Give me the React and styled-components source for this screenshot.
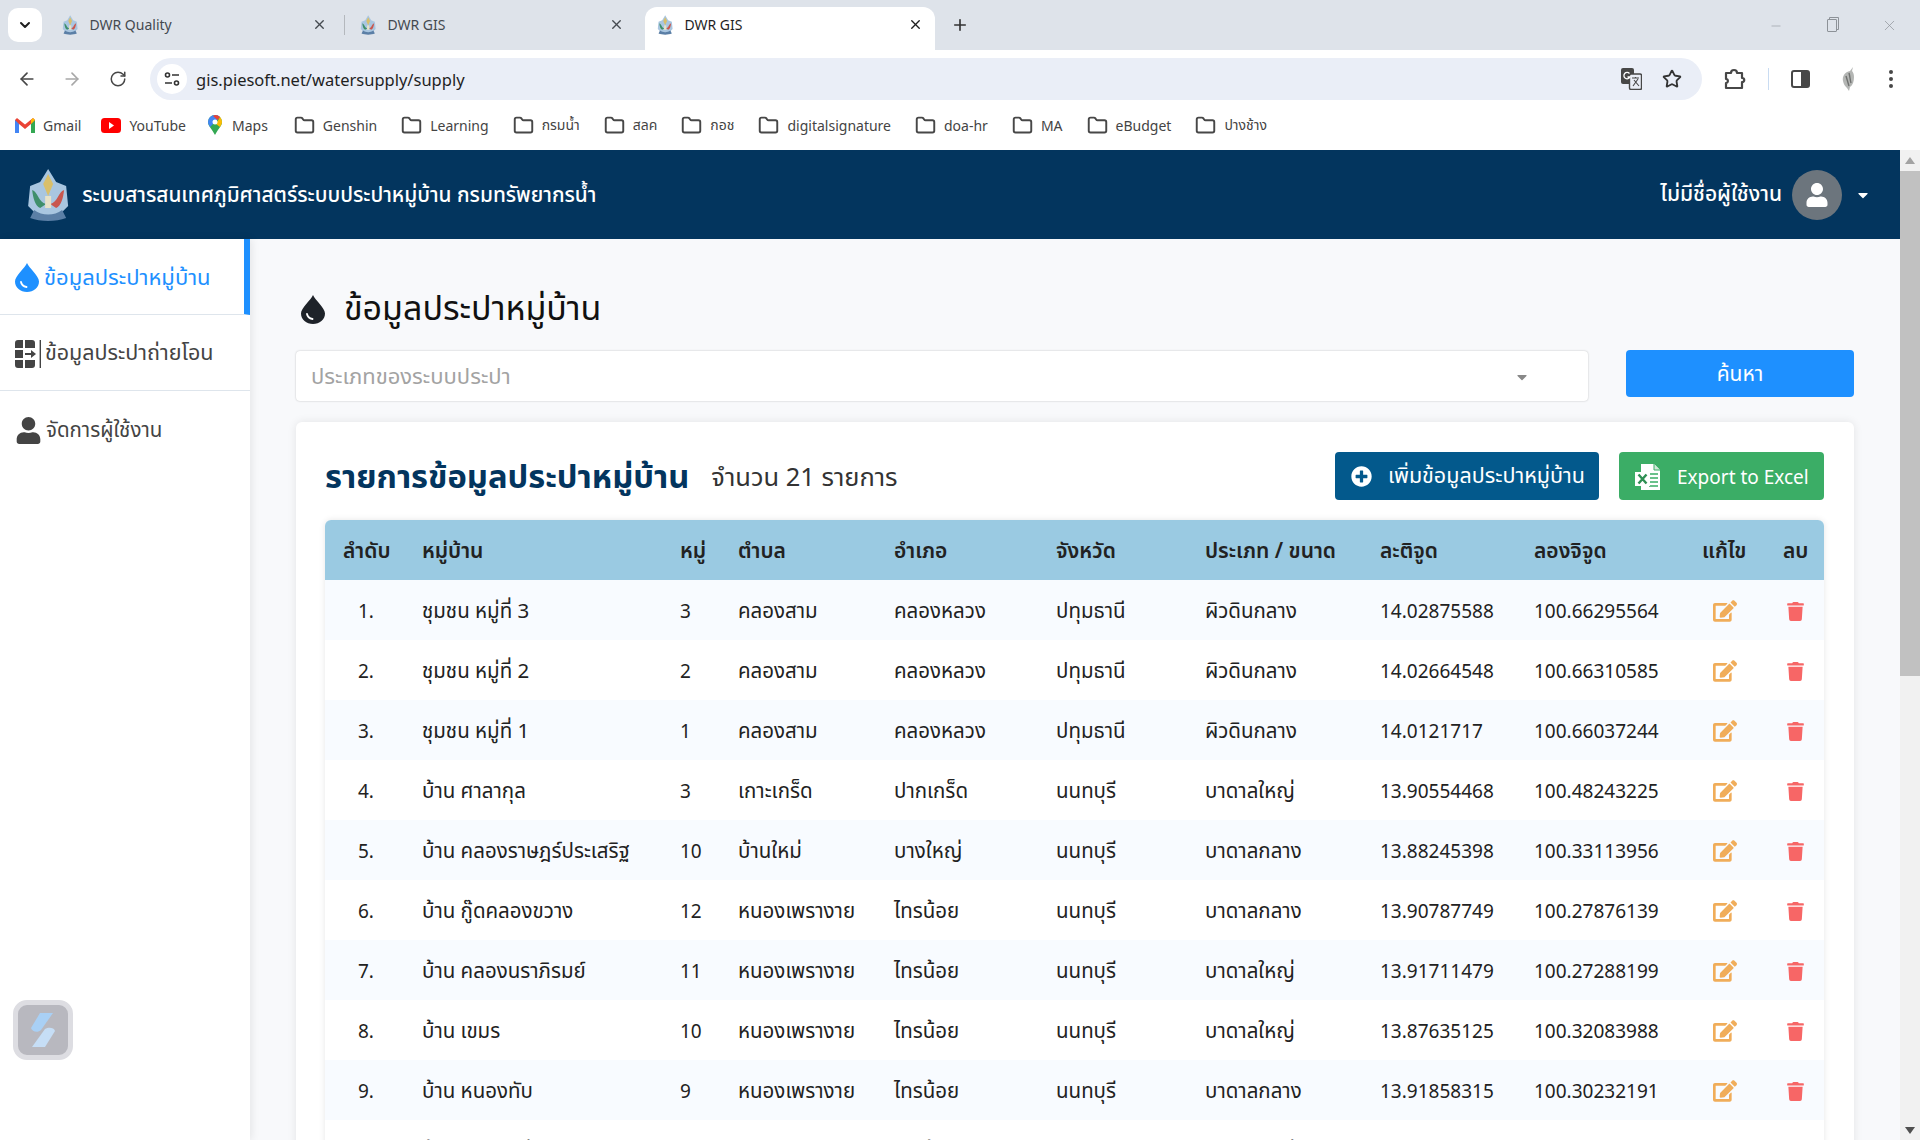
import React from "react";
import styled, { createGlobalStyle } from "styled-components";
import { FaUser, FaEdit, FaTrash, FaPlusCircle, FaCaretDown } from "react-icons/fa";
import { ArrowLeft, ArrowRight, RotateCw, Star, ChevronDown, X, Plus, Minus, Folder } from "lucide-react";

const THAI = `"Noto Sans", "Noto Sans Thai", "Open Sans", sans-serif`;

const GlobalStyle = createGlobalStyle`
  html, body { margin: 0; padding: 0; background: #fff; overflow: hidden; }
  * { box-sizing: border-box; }
  body { font-family: ${THAI}; }
`;

const rows = [
  ["1.", "ชุมชน หมู่ที่ 3", "3", "คลองสาม", "คลองหลวง", "ปทุมธานี", "ผิวดินกลาง", "14.02875588", "100.66295564"],
  ["2.", "ชุมชน หมู่ที่ 2", "2", "คลองสาม", "คลองหลวง", "ปทุมธานี", "ผิวดินกลาง", "14.02664548", "100.66310585"],
  ["3.", "ชุมชน หมู่ที่ 1", "1", "คลองสาม", "คลองหลวง", "ปทุมธานี", "ผิวดินกลาง", "14.0121717", "100.66037244"],
  ["4.", "บ้าน ศาลากุล", "3", "เกาะเกร็ด", "ปากเกร็ด", "นนทบุรี", "บาดาลใหญ่", "13.90554468", "100.48243225"],
  ["5.", "บ้าน คลองราษฎร์ประเสริฐ", "10", "บ้านใหม่", "บางใหญ่", "นนทบุรี", "บาดาลกลาง", "13.88245398", "100.33113956"],
  ["6.", "บ้าน กู๊ดคลองขวาง", "12", "หนองเพรางาย", "ไทรน้อย", "นนทบุรี", "บาดาลกลาง", "13.90787749", "100.27876139"],
  ["7.", "บ้าน คลองนราภิรมย์", "11", "หนองเพรางาย", "ไทรน้อย", "นนทบุรี", "บาดาลใหญ่", "13.91711479", "100.27288199"],
  ["8.", "บ้าน เขมร", "10", "หนองเพรางาย", "ไทรน้อย", "นนทบุรี", "บาดาลใหญ่", "13.87635125", "100.32083988"],
  ["9.", "บ้าน หนองทับ", "9", "หนองเพรางาย", "ไทรน้อย", "นนทบุรี", "บาดาลกลาง", "13.91858315", "100.30232191"],
  ["10.", "บ้าน หนองกร่าง", "8", "หนองเพรางาย", "ไทรน้อย", "นนทบุรี", "บาดาลใหญ่", "13.89214730", "100.29871042"],
];

const bookmarks = ["Genshin", "Learning", "กรมน้ำ", "สลค", "กอช", "digitalsignature", "doa-hr", "MA", "eBudget", "ปางช้าง"];

const columns = "97px 258px 58px 156px 162px 149px 175px 154px 168px 81px 1fr";

const Page = styled.div`
  width: 1920px;
  height: 1140px;
  overflow: hidden;
  display: flex;
  flex-direction: column;
  color: #1f1f1f;
`;

const TabStrip = styled.div`
  height: 50px;
  flex: none;
  background: #dee3ea;
  display: flex;
  align-items: flex-end;
  padding-left: 8px;
`;
const TabMenu = styled.div`
  width: 34px;
  height: 34px;
  margin-bottom: 8px;
  background: #fff;
  border-radius: 10px;
  display: flex;
  align-items: center;
  justify-content: center;
  color: #1f1f1f;
`;
const Tab = styled.div`
  width: ${(p) => p.$w}px;
  height: 43px;
  padding: 0 0 8px ${(p) => p.$pad}px;
  display: flex;
  align-items: center;
  font-size: 14px;
  color: ${(p) => (p.$active ? "#1f1f1f" : "#444a50")};
  background: ${(p) => (p.$active ? "#fff" : "transparent")};
  border-radius: ${(p) => (p.$active ? "12px 12px 0 0" : "0")};
`;
const TabTitle = styled.span`
  margin-left: 11px;
  flex: 1;
`;
const TabClose = styled.span`
  display: flex;
  margin-right: ${(p) => p.$mr}px;
`;
const TabSep = styled.div`
  width: 1px;
  height: 20px;
  margin: 0 0 15px 0;
  background: #b4b8bd;
`;
const NewTab = styled.div`
  margin: 0 0 16px 16px;
  display: flex;
  color: #333;
`;
const WindowButtons = styled.div`
  margin-left: auto;
  padding: 0 22px 16px 0;
  display: flex;
  gap: 44px;
  align-items: center;
  color: #8d9298;
`;
const RestoreIcon = styled.div`
  width: 10px;
  height: 13px;
  border: 1px solid #8d9298;
  border-radius: 1px;
  box-shadow: 2px -2px 0 -1px #dee3ea, 2px -2px 0 0 #8d9298;
`;

const Toolbar = styled.div`
  height: 50px;
  flex: none;
  background: #fff;
  border-radius: 10px 10px 0 0;
  display: flex;
  align-items: center;
  padding: 8px 0 0 17px;
  color: #474747;
`;
const NavButton = styled.div`
  width: 20px;
  display: flex;
  justify-content: center;
  margin-right: ${(p) => p.$mr}px;
  color: ${(p) => (p.$off ? "#a8a8a8" : "#474747")};
`;
const Omnibox = styled.div`
  width: 1552px;
  height: 42px;
  background: #eaeef7;
  border-radius: 21px;
  display: flex;
  align-items: center;
  padding: 0 20px 0 7px;
`;
const SiteChip = styled.div`
  width: 30px;
  height: 30px;
  border-radius: 50%;
  background: #fff;
  display: flex;
  align-items: center;
  justify-content: center;
`;
const UrlText = styled.span`
  margin-left: 9px;
  font-size: 16.5px;
  color: #1f1f1f;
  flex: 1;
`;
const OmniIcons = styled.div`
  display: flex;
  align-items: center;
  gap: 20px;
`;
const ToolIcons = styled.div`
  display: flex;
  align-items: center;
  margin-left: 22px;
  color: #474747;
`;
const ToolDivider = styled.div`
  width: 1px;
  height: 22px;
  background: #c9dcf2;
  margin: 0 22px;
`;
const ToolGap = styled.div`
  display: flex;
  margin-right: ${(p) => p.$mr}px;
`;

const BookmarkBar = styled.div`
  height: 50px;
  flex: none;
  background: #fff;
  display: flex;
  align-items: center;
  padding-left: 15px;
  font-size: 14px;
  color: #444;
`;
const Bookmark = styled.div`
  display: flex;
  align-items: center;
  gap: ${(p) => p.$gap || 8}px;
  margin-right: ${(p) => p.$mr || 24}px;
`;

const AppBody = styled.div`
  flex: 1;
  min-height: 0;
  display: flex;
`;
const Viewport = styled.div`
  flex: 1;
  min-width: 0;
  display: flex;
  flex-direction: column;
  background: #f8f9fb;
`;
const Scrollbar = styled.div`
  width: 20px;
  flex: none;
  background: #f1f1f1;
  display: flex;
  flex-direction: column;
  align-items: center;
`;
const ScrollArrow = styled.div`
  flex: none;
  width: 0;
  height: 0;
  align-self: center;
  margin-top: ${(p) => (p.$down ? "auto" : "7px")};
  margin-bottom: ${(p) => (p.$down ? "6px" : "0")};
  border-left: 5px solid transparent;
  border-right: 5px solid transparent;
  border-bottom: ${(p) => (p.$down ? "0" : "7px solid #a3a3a3")};
  border-top: ${(p) => (p.$down ? "7px solid #505050" : "0")};
`;
const ScrollThumb = styled.div`
  width: 100%;
  height: 505px;
  margin-top: 7px;
  background: #c1c1c1;
`;

const TopBar = styled.header`
  height: 89px;
  flex: none;
  background: #03355e;
  display: flex;
  align-items: center;
  padding: 0 29px 0 26px;
  color: #fff;
`;
const BrandTitle = styled.div`
  margin-left: 12px;
  padding-top: 2px;
  font-size: 20.8px;
  font-weight: 500;
`;
const UserName = styled.div`
  margin-left: auto;
  font-size: 21px;
  font-weight: 500;
`;
const Avatar = styled.div`
  width: 50px;
  height: 50px;
  margin: 0 13px 0 10px;
  border-radius: 50%;
  background: #6c757d;
  display: flex;
  align-items: center;
  justify-content: center;
  color: #fff;
`;

const Columns = styled.div`
  flex: 1;
  min-height: 0;
  display: flex;
`;
const Sidebar = styled.nav`
  width: 250px;
  flex: none;
  background: #fff;
  box-shadow: 2px 0 8px rgba(0, 0, 0, 0.08);
  z-index: 1;
`;
const NavItem = styled.div`
  height: 76px;
  display: flex;
  align-items: center;
  padding: 2px 0 0 15px;
  gap: ${(p) => p.$gap}px;
  font-size: ${(p) => p.$fs}px;
  color: ${(p) => (p.$active ? "#1e90ff" : "#444")};
  border-right: ${(p) => (p.$active ? "6px solid #1e90ff" : "0")};
  border-bottom: ${(p) => (p.$last ? "0" : "1px solid #dee5ec")};
`;
const FloatBadge = styled.div`
  position: fixed;
  left: 13px;
  top: 1000px;
  width: 60px;
  height: 60px;
  border-radius: 14px;
  background: #b8b8bf;
  border: 5px solid #dddde2;
  display: flex;
  align-items: center;
  justify-content: center;
  z-index: 3;
`;

const Main = styled.main`
  flex: 1;
  min-width: 0;
  padding: 42px 46px 0 46px;
  overflow: hidden;
`;
const PageTitle = styled.h1`
  margin: 0 0 13px;
  height: 56px;
  display: flex;
  align-items: center;
  gap: 19px;
  padding-left: 5px;
  font-size: 34px;
  font-weight: 400;
  color: #111;
`;
const SearchRow = styled.div`
  display: flex;
  gap: 38px;
  align-items: flex-start;
  height: 52px;
`;
const SelectBox = styled.div`
  flex: 1;
  height: 50px;
  margin-top: 1px;
  background: #fff;
  border-radius: 4px;
  box-shadow: 0 0 2px rgba(0, 0, 0, 0.25);
  display: flex;
  align-items: center;
  justify-content: space-between;
  padding: 1px 58px 0 15px;
  font-size: 22px;
  color: #a3a3a3;
`;
const SearchButton = styled.div`
  width: 228px;
  height: 47px;
  padding-top: 2px;
  border-radius: 4px;
  background: #1e90ff;
  color: #fff;
  font-size: 21px;
  display: flex;
  align-items: center;
  justify-content: center;
`;
const Card = styled.section`
  margin-top: 20px;
  background: #fff;
  border-radius: 6px;
  box-shadow: 0 0 10px rgba(0, 0, 0, 0.09);
  padding: 30px 30px 0 29px;
`;
const CardHead = styled.div`
  display: flex;
  align-items: center;
  height: 48px;
  margin-bottom: 20px;
`;
const CardTitle = styled.h2`
  margin: 0;
  padding-top: 3px;
  font-size: 32.7px;
  font-weight: 700;
  color: #03355e;
`;
const CardCount = styled.span`
  margin-left: 22px;
  padding-top: 4px;
  font-size: 25.5px;
  color: #333;
`;
const ActionButton = styled.div`
  height: 48px;
  width: ${(p) => p.$w}px;
  margin-left: ${(p) => p.$ml};
  padding: 1px 0 0 16px;
  border-radius: 4px;
  background: ${(p) => p.$bg};
  color: #fff;
  font-size: ${(p) => p.$fs}px;
  display: flex;
  align-items: center;
  gap: ${(p) => p.$gap}px;
`;
const DataTable = styled.div`
  border-radius: 6px 6px 0 0;
  box-shadow: 0 0 6px rgba(0, 0, 0, 0.1);
  font-size: 20.5px;
  color: #222;
`;
const HeadRow = styled.div`
  display: grid;
  grid-template-columns: ${columns};
  height: 60px;
  padding-top: 2px;
  align-items: center;
  background: #9acae2;
  border-radius: 6px 6px 0 0;
  font-weight: 600;
  font-size: 21px;
`;
const BodyRow = styled.div`
  display: grid;
  grid-template-columns: ${columns};
  height: 60px;
  padding-top: 2px;
  align-items: center;
  background: ${(p) => (p.$odd ? "#f8fbff" : "#fff")};
`;
const IndexCell = styled.div`
  padding-left: ${(p) => (p.$head ? "18px" : "33px")};
  font-size: ${(p) => (p.$head ? "inherit" : "19px")};
`;
const NumberCell = styled.div`
  font-size: 19px;
`;
const IconCell = styled.div`
  display: flex;
  color: ${(p) => p.$color};
  padding-left: ${(p) => p.$pl}px;
`;

function Emblem({ size = 54 }) {
  return (
    <svg width={size * 0.82} height={size} viewBox="0 0 44 54">
      <path d="M22 1 L30 14 L40 18 L42 38 L34 46 L22 48 L10 46 L2 38 L4 18 L14 14 Z" fill="#a9c6e0" />
      <path d="M22 6 L27 16 L22 28 L17 16 Z" fill="#d9bf6a" />
      <path d="M6 22 C12 24 12 34 20 36 L14 40 C9 38 7 30 6 22 Z" fill="#3f8f6b" />
      <path d="M38 22 C32 24 32 34 24 36 L30 40 C35 38 37 30 38 22 Z" fill="#c9574e" />
      <path d="M8 42 C16 48 28 48 36 42 L40 50 C30 54 14 54 4 50 Z" fill="#5b7fa6" />
      <rect x="19" y="28" width="6" height="12" fill="#e7e2c8" />
    </svg>
  );
}

function DropIcon({ color }) {
  return (
    <svg width="24" height="29" viewBox="0 0 24 29">
      <path d="M12 0C10 5 0 13 0 18.500C0 24.500 5.500 29 12 29s12-4.500 12-10.500C24 13 14 5 12 0z" fill={color} />
      <path d="M6 19c.5 3 2.500 4.500 5.500 5" fill="none" stroke="#fff" strokeWidth="1.800" strokeLinecap="round" />
    </svg>
  );
}

function GmailIcon() {
  return (
    <svg width="20" height="15" viewBox="0 0 20 15">
      <path d="M0 2v13h4V6l6 5 6-5v9h4V2L18 0l-8 6.500L2 0z" fill="#ea4335" />
      <path d="M0 2v13h4V6z" fill="#4285f4" />
      <path d="M16 6v9h4V2z" fill="#34a853" />
      <path d="M18 0l2 2-4 4V2z" fill="#fbbc04" />
    </svg>
  );
}

function YoutubeIcon() {
  return (
    <svg width="20" height="15" viewBox="0 0 20 15">
      <rect width="20" height="15" rx="3.500" fill="#f00" />
      <path d="M8 4l5 3.500-5 3.500z" fill="#fff" />
    </svg>
  );
}

function MapsIcon() {
  return (
    <svg width="14" height="20" viewBox="0 0 14 20">
      <path d="M7 0a7 7 0 0 1 7 7c0 4-4 7-7 13C4 14 0 11 0 7a7 7 0 0 1 7-7z" fill="#34a853" />
      <path d="M7 0a7 7 0 0 1 5 2L2 12C1 10 0 9 0 7a7 7 0 0 1 7-7z" fill="#4285f4" />
      <path d="M7 0a7 7 0 0 1 5 2L9.500 5 5 1z" fill="#ea4335" />
      <path d="M12 2a7 7 0 0 1 2 5c0 2-1 3-2 5L8 9z" fill="#fbbc04" />
      <circle cx="7" cy="7" r="2.500" fill="#fff" />
    </svg>
  );
}

function TuneIcon() {
  return (
    <svg width="16" height="16" viewBox="0 0 16 16" fill="none" stroke="#333" strokeWidth="1.600">
      <circle cx="3.500" cy="4" r="2" />
      <path d="M8 4h7M1 12h7" />
      <circle cx="12.500" cy="12" r="2" />
    </svg>
  );
}

function TranslateIcon() {
  return (
    <svg width="21" height="22" viewBox="0 0 21 22">
      <rect x="0" y="0" width="13" height="16" rx="2" fill="#474747" />
      <rect x="8.500" y="6" width="12" height="15.500" rx="1.500" fill="#eaeef7" stroke="#474747" strokeWidth="1.400" />
      <path d="M11 10h7M14.500 9v1.500M12 18l5-7M13 12l5 6" stroke="#474747" strokeWidth="1.100" fill="none" />
      <path d="M8.500 5.500A3.200 3.200 0 1 0 9 9H6.500" stroke="#fff" strokeWidth="1.300" fill="none" />
    </svg>
  );
}

function ExtensionIcon() {
  return (
    <svg width="22" height="22" viewBox="0 0 22 22" fill="none" stroke="#474747" strokeWidth="2.200" strokeLinejoin="round">
      <path d="M2 5h5c0-4 6-4 6 0h5v5c3 0 3 4 0 4v6H2v-5c2.500 0 2.500-4 0-4z" />
    </svg>
  );
}

function SidePanelIcon() {
  return (
    <svg width="19" height="18" viewBox="0 0 19 18">
      <rect x="1" y="1" width="17" height="16" rx="2" fill="none" stroke="#474747" strokeWidth="2" />
      <rect x="10" y="1" width="8" height="16" fill="#474747" />
    </svg>
  );
}

function ProfileLeaf() {
  return (
    <svg width="16" height="24" viewBox="0 0 16 24">
      <path d="M13 0L10 4C5 5 2 9 3 14c.5 3 2 5 4 7l2 3 1-4c3-2 4-6 4-10 0-3-1-5-2-6z" fill="#b4b6b4" />
      <path d="M6 9c1 3 2 7 3 10M9 6c1 3 1 7 2 10" stroke="#6f716f" strokeWidth="1.400" fill="none" />
    </svg>
  );
}

function MoreDots() {
  return (
    <svg width="4" height="18" viewBox="0 0 4 18" fill="#474747">
      <circle cx="2" cy="2" r="2" />
      <circle cx="2" cy="9" r="2" />
      <circle cx="2" cy="16" r="2" />
    </svg>
  );
}

function ExcelIcon() {
  return (
    <svg width="26" height="28" viewBox="0 0 26 28">
      <path d="M6 1h13l6 6v20H6z" fill="#fff" />
      <path d="M19 1v6h6" fill="#cfe8d8" stroke="#3bad66" strokeWidth="1" />
      <path d="M14 11h9M14 15h9M14 19h9M14 23h9" stroke="#3bad66" strokeWidth="1.500" />
      <rect x="0" y="9" width="15" height="14" fill="#fff" />
      <path d="M3.500 11.500l8 9M11.500 11.500l-8 9" stroke="#2e8f53" strokeWidth="2.400" />
    </svg>
  );
}

function TransferIcon() {
  return (
    <svg width="27" height="28" viewBox="0 0 27 28" fill="#444">
      <path d="M0 3a3 3 0 0 1 3-3h5v8H0zM0 10h8v8H0zM0 20h8v8H3a3 3 0 0 1-3-3z" />
      <path d="M10 0h7a3 3 0 0 1 3 3v5H10zM10 20h10v5a3 3 0 0 1-3 3h-7z" />
      <path d="M10 13h6v-3l5 4-5 4v-3h-6z" />
      <rect x="24.600" y="0" width="1.400" height="28" />
    </svg>
  );
}

function SlashLogo() {
  return (
    <svg width="26" height="36" viewBox="0 0 26 36">
      <path d="M10 1h13L11 18c-3 3-9 2-10-2z" fill="#a9d0f5" />
      <path d="M15 17c3-2 9-2 10 2L15 35H2z" fill="#c6def6" />
    </svg>
  );
}

export default function App() {
  return (
    <Page>
      <GlobalStyle />
      <TabStrip>
        <TabMenu>
          <ChevronDown size={16} strokeWidth={3} />
        </TabMenu>
        <Tab $w={302} $pad={20}>
          <Emblem size={20} />
          <TabTitle>DWR Quality</TabTitle>
          <TabClose $mr={17}>
            <X size={15} strokeWidth={2.2} />
          </TabClose>
        </Tab>
        <TabSep />
        <Tab $w={300} $pad={15}>
          <Emblem size={20} />
          <TabTitle>DWR GIS</TabTitle>
          <TabClose $mr={21}>
            <X size={15} strokeWidth={2.2} />
          </TabClose>
        </Tab>
        <Tab $w={290} $pad={12} $active>
          <Emblem size={20} />
          <TabTitle>DWR GIS</TabTitle>
          <TabClose $mr={12}>
            <X size={15} strokeWidth={2.2} />
          </TabClose>
        </Tab>
        <NewTab>
          <Plus size={18} strokeWidth={2.2} />
        </NewTab>
        <WindowButtons>
          <Minus size={14} strokeWidth={1} />
          <RestoreIcon />
          <X size={17} strokeWidth={1} />
        </WindowButtons>
      </TabStrip>

      <Toolbar>
        <NavButton $mr={25}><ArrowLeft size={20} /></NavButton>
        <NavButton $mr={26} $off><ArrowRight size={20} /></NavButton>
        <NavButton $mr={22}><RotateCw size={18} /></NavButton>
        <Omnibox>
          <SiteChip><TuneIcon /></SiteChip>
          <UrlText>gis.piesoft.net/watersupply/supply</UrlText>
          <OmniIcons>
            <TranslateIcon />
            <Star size={20} strokeWidth={2.2} color="#333" />
          </OmniIcons>
        </Omnibox>
        <ToolIcons>
          <ExtensionIcon />
          <ToolDivider />
          <ToolGap $mr={30}><SidePanelIcon /></ToolGap>
          <ToolGap $mr={33}><ProfileLeaf /></ToolGap>
          <MoreDots />
        </ToolIcons>
      </Toolbar>

      <BookmarkBar>
        <Bookmark $mr={20}><GmailIcon />Gmail</Bookmark>
        <Bookmark $mr={22}><YoutubeIcon />YouTube</Bookmark>
        <Bookmark $mr={26} $gap={10}><MapsIcon />Maps</Bookmark>
        {bookmarks.map((b) => (
          <Bookmark key={b}>
            <Folder size={21} strokeWidth={2.2} color="#474747" />
            {b}
          </Bookmark>
        ))}
      </BookmarkBar>

      <AppBody>
        <Viewport>
          <TopBar>
            <Emblem size={54} />
            <BrandTitle>ระบบสารสนเทศภูมิศาสตร์ระบบประปาหมู่บ้าน กรมทรัพยากรน้ำ</BrandTitle>
            <UserName>ไม่มีชื่อผู้ใช้งาน</UserName>
            <Avatar><FaUser size={24} /></Avatar>
            <FaCaretDown size={16} />
          </TopBar>
          <Columns>
            <Sidebar>
              <NavItem $active $gap={5} $fs={22}>
                <DropIcon color="#1e90ff" />
                ข้อมูลประปาหมู่บ้าน
              </NavItem>
              <NavItem $gap={3} $fs={21.5}>
                <TransferIcon />
                ข้อมูลประปาถ่ายโอน
              </NavItem>
              <NavItem $last $gap={4} $fs={20.5}>
                <FaUser size={27} />
                จัดการผู้ใช้งาน
              </NavItem>
            </Sidebar>
            <Main>
              <PageTitle>
                <DropIcon color="#1e2329" />
                ข้อมูลประปาหมู่บ้าน
              </PageTitle>
              <SearchRow>
                <SelectBox>
                  ประเภทของระบบประปา
                  <FaCaretDown size={16} color="#888" />
                </SelectBox>
                <SearchButton>ค้นหา</SearchButton>
              </SearchRow>
              <Card>
                <CardHead>
                  <CardTitle>รายการข้อมูลประปาหมู่บ้าน</CardTitle>
                  <CardCount>จำนวน 21 รายการ</CardCount>
                  <ActionButton $w={264} $ml="auto" $bg="#03598c" $gap={16} $fs={21.5}>
                    <FaPlusCircle size={21} />
                    เพิ่มข้อมูลประปาหมู่บ้าน
                  </ActionButton>
                  <ActionButton $w={205} $ml="20px" $bg="#3bad66" $gap={16} $fs={19}>
                    <ExcelIcon />
                    Export to Excel
                  </ActionButton>
                </CardHead>
                <DataTable>
                  <HeadRow>
                    <IndexCell $head>ลำดับ</IndexCell>
                    <div>หมู่บ้าน</div>
                    <div>หมู่</div>
                    <div>ตำบล</div>
                    <div>อำเภอ</div>
                    <div>จังหวัด</div>
                    <div>ประเภท / ขนาด</div>
                    <div>ละติจูด</div>
                    <div>ลองจิจูด</div>
                    <div>แก้ไข</div>
                    <div>ลบ</div>
                  </HeadRow>
                  {rows.map((r, i) => (
                    <BodyRow key={r[0]} $odd={i % 2 === 0}>
                      <IndexCell>{r[0]}</IndexCell>
                      <div>{r[1]}</div>
                      <NumberCell>{r[2]}</NumberCell>
                      <div>{r[3]}</div>
                      <div>{r[4]}</div>
                      <div>{r[5]}</div>
                      <div>{r[6]}</div>
                      <NumberCell>{r[7]}</NumberCell>
                      <NumberCell>{r[8]}</NumberCell>
                      <IconCell $color="#f0ad5a" $pl={11}><FaEdit size={24} /></IconCell>
                      <IconCell $color="#f76666" $pl={3}><FaTrash size={19} /></IconCell>
                    </BodyRow>
                  ))}
                </DataTable>
              </Card>
            </Main>
          </Columns>
        </Viewport>
        <Scrollbar>
          <ScrollArrow />
          <ScrollThumb />
          <ScrollArrow $down />
        </Scrollbar>
      </AppBody>
      <FloatBadge><SlashLogo /></FloatBadge>
    </Page>
  );
}
